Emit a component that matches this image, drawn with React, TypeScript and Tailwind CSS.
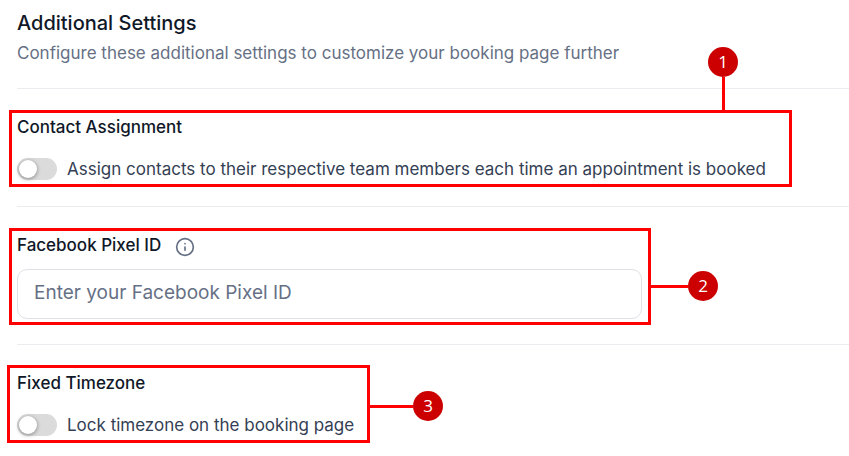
import { useState } from 'react';
import type { ReactNode } from 'react';
import { Info } from 'lucide-react';

interface CalloutProps {
  step: number;
  boxClassName: string;
  markerClassName: string;
  lineClassName: string;
}

// Red outline around a setting, joined to a numbered marker
function Callout({ step, boxClassName, markerClassName, lineClassName }: CalloutProps) {
  return (
    <div className={`pointer-events-none absolute border-3 border-[#ff0000] ${boxClassName}`}>
      <div className={`absolute flex items-center ${markerClassName}`}>
        <span className={`bg-[#ff0000] ${lineClassName}`} />
        <span className="flex size-[30px] shrink-0 items-center justify-center rounded-full bg-[#cc0000] font-['Open_Sans',sans-serif] text-[17px] leading-6 text-white">
          {step}
        </span>
      </div>
    </div>
  );
}

function Section({ children }: { children: ReactNode }) {
  return <section className="border-t border-[#eaecf0] pt-[26px] pb-[25px]">{children}</section>;
}

interface ToggleSettingProps {
  id: string;
  title: string;
  label: string;
  className: string;
  children: ReactNode;
}

function ToggleSetting({ id, title, label, className, children }: ToggleSettingProps) {
  const [enabled, setEnabled] = useState(false);

  return (
    <div className={`relative max-w-full ${className}`}>
      <h3 className="text-[17px] leading-6 font-medium text-[#101828]">{title}</h3>
      <div className="mt-[18px] flex items-center gap-[10px]">
        <input
          id={id}
          type="checkbox"
          role="switch"
          checked={enabled}
          onChange={(e) => setEnabled(e.target.checked)}
          className="flex h-[22px] w-10 shrink-0 cursor-pointer appearance-none items-center rounded-full bg-[#dbdbdb] px-0.5 before:size-[18px] before:rounded-full before:bg-white before:shadow-[0_1px_4px_rgba(0,0,0,0.4)] before:transition-transform checked:bg-blue-600 checked:before:translate-x-[18px]"
        />
        <label htmlFor={id} className="text-[17px] leading-6 text-[#344054]">
          {label}
        </label>
      </div>
      {children}
    </div>
  );
}

export default function App() {
  const [pixelId, setPixelId] = useState('');

  return (
    <main className="overflow-hidden bg-white pt-[9px] pl-[17px] font-['Inter',sans-serif]">
      <header className="pb-[23px]">
        <h2 className="text-[20px] leading-7 font-medium text-[#101828]">Additional Settings</h2>
        <p className="mt-1 text-[17px] leading-6 text-[#667085]">
          Configure these additional settings to customize your booking page further
        </p>
      </header>

      <Section>
        <ToggleSetting
          id="contact-assignment"
          title="Contact Assignment"
          label="Assign contacts to their respective team members each time an appointment is booked"
          className="w-[767px]"
        >
          <Callout
            step={1}
            boxClassName="-inset-x-2 -top-[5px] -bottom-1.5"
            markerClassName="right-[51px] bottom-full flex-col-reverse"
            lineClassName="h-9 w-[3px]"
          />
        </ToggleSetting>
      </Section>

      <Section>
        <div className="relative w-[625px] max-w-full">
          <div className="flex h-6 items-end gap-[14px]">
            <label htmlFor="pixel-id" className="text-[17px] leading-6 font-medium text-[#101828]">
              Facebook Pixel ID
            </label>
            <button type="button" aria-label="About Facebook Pixel ID" className="text-[#667085]">
              <Info className="size-5" strokeWidth={2} />
            </button>
          </div>
          <input
            id="pixel-id"
            type="text"
            value={pixelId}
            onChange={(e) => setPixelId(e.target.value)}
            placeholder="Enter your Facebook Pixel ID"
            className="mt-3 block h-[50px] w-full rounded-[10px] border border-[#e0e0e6] px-4 pb-1 text-[19px] leading-6 text-[#344054] placeholder:text-[#667085]"
          />
          <Callout
            step={2}
            boxClassName="-right-[9px] -left-2 -top-[5px] -bottom-1.5"
            markerClassName="top-10 left-full"
            lineClassName="h-[3px] w-10"
          />
        </div>
      </Section>

      <Section>
        <ToggleSetting
          id="fixed-timezone"
          title="Fixed Timezone"
          label="Lock timezone on the booking page"
          className="w-[343px]"
        >
          <Callout
            step={3}
            boxClassName="-inset-x-[10px] -top-1.5 -bottom-1.5"
            markerClassName="top-[23px] left-full"
            lineClassName="h-[3px] w-[46px]"
          />
        </ToggleSetting>
      </Section>
    </main>
  );
}
